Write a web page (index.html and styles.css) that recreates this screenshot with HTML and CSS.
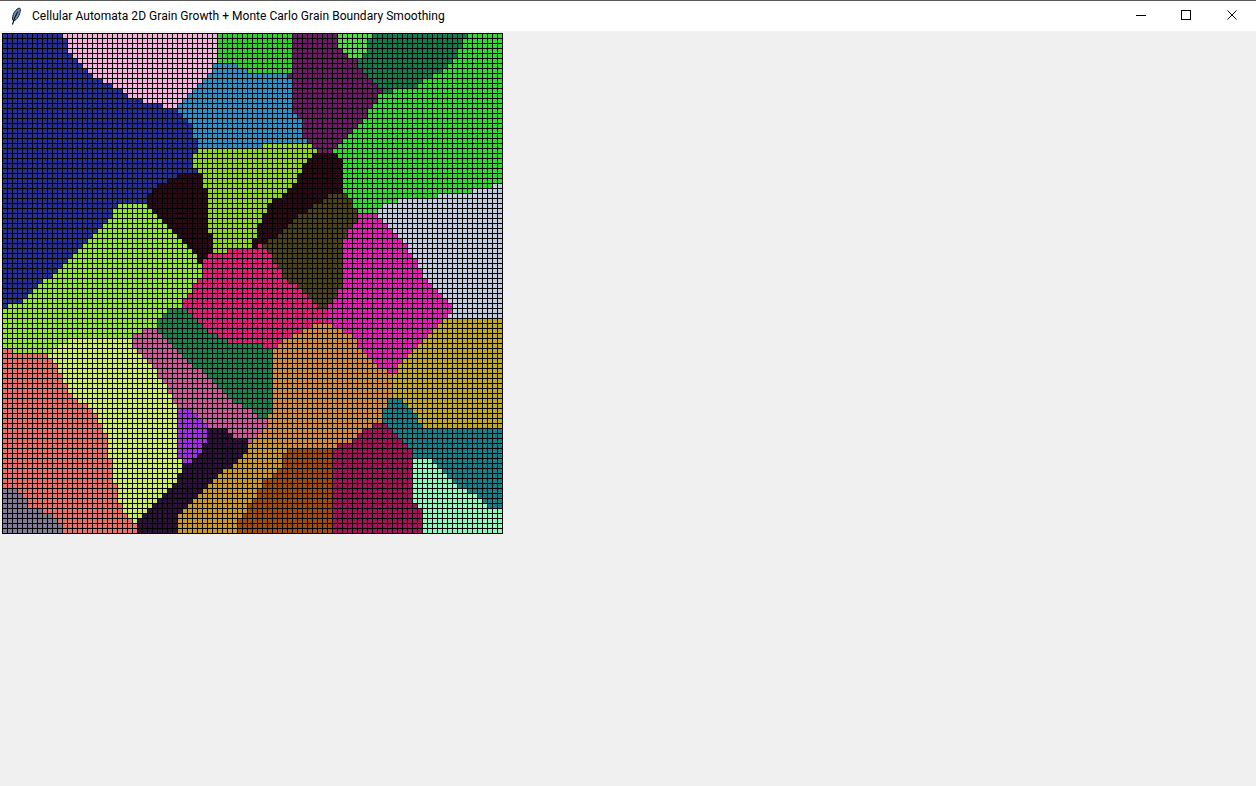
FILE: index.html
```html
<!DOCTYPE html>
<html lang="en">
<head>
  <meta charset="UTF-8">
  <title>Cellular Automata 2D Grain Growth + Monte Carlo Grain Boundary Smoothing</title>
  <link rel="stylesheet" href="styles.css">
</head>
<body>
  <div class="window">
    <header class="titlebar">
      <svg class="app-icon" width="16" height="20" viewBox="0 0 16 20">
        <path d="M11.500 2C8 3 5 7 4.500 12c-.2 1.500.3 2.500 1 3C9 14 12 9 12.500 3.500z" fill="#6d8fba" stroke="#141c28"/>
        <path d="M10 5.500C8 8.500 6 12 4.500 18.500" fill="none" stroke="#0c1118" stroke-width="1.200"/>
      </svg>
      <span class="title">Cellular Automata 2D Grain Growth + Monte Carlo Grain Boundary Smoothing</span>
      <div class="controls">
        <button class="ctrl ctrl-min" aria-label="Minimize">
          <svg width="10" height="10" viewBox="0 0 10 10"><path d="M0 5.500H10" stroke="#000"/></svg>
        </button>
        <button class="ctrl" aria-label="Maximize">
          <svg width="10" height="10" viewBox="0 0 10 10"><rect x=".5" y=".5" width="9" height="9" fill="none" stroke="#000"/></svg>
        </button>
        <button class="ctrl" aria-label="Close">
          <svg width="10" height="10" viewBox="0 0 10 10"><path d="M.5 .5L9.500 9.500M9.500 .5L.5 9.500" stroke="#000"/></svg>
        </button>
      </div>
    </header>
    <main class="content">
      <canvas id="grid" width="501" height="501"></canvas>
    </main>
  </div>
  <script src="grid.js"></script>
</body>
</html>
```

FILE: styles.css
```css
html, body {
    height: 100%;
    margin: 0;
}

body {
    font-family: Roboto, sans-serif;
    background-color: #f0f0f0;
}

.window {
    height: 100%;
    display: flex;
    flex-direction: column;
    overflow: hidden;
}

.titlebar {
    flex: none;
    height: 30px;
    display: flex;
    align-items: center;
    background-color: #fff;
    border-top: 1px solid #5a5a5a;
}

.app-icon {
    flex: none;
    margin-left: 8px;
    margin-right: 8px;
}

.title {
    font-size: 12px;
    letter-spacing: .04px;
    color: #000;
    white-space: nowrap;
}

.controls {
    margin-left: auto;
    display: flex;
    height: 100%;
    padding-right: 1px;
    padding-bottom: 2px;
    box-sizing: border-box;
}

.ctrl {
    width: 46px;
    padding: 0;
    border: 0;
    background: none;
    display: flex;
    align-items: center;
    justify-content: center;
}

.ctrl-min svg {
    margin-left: 2px;
}

.content {
    flex: 1;
    padding: 2px;
}

#grid {
    display: block;
}
```

FILE: grid.js
```js
// grain outlines in page pixels, later ones paint over earlier ones
const CELL = 5;
const COUNT = 100;
const LEFT = 2;
const TOP = 33;

const grains = [
  ['#252f96', [[2,33],[63,33],[68,50],[90,73],[110,85],[137,100],[168,108],[177,108],[182,118],[192,127],[198,148],[193,158],[193,168],[197,173],[183,173],[163,183],[147,198],[147,203],[122,203],[93,235],[78,250],[48,278],[33,293],[17,303],[2,308]]],
  ['#f5b0dc', [[63,33],[217,33],[217,63],[205,78],[190,98],[177,108],[168,108],[137,100],[110,85],[90,73],[68,50]]],
  ['#33d02c', [[217,33],[292,33],[292,70],[283,75],[260,75],[240,68],[228,63],[217,63]]],
  ['#3090c4', [[227,63],[240,68],[260,75],[283,75],[292,85],[293,108],[303,123],[303,143],[262,146],[198,148],[192,127],[182,118],[177,108],[182,100],[205,78],[217,63]]],
  ['#6a1d62', [[292,33],[337,33],[337,43],[352,58],[358,63],[362,72],[382,88],[378,98],[368,113],[357,128],[337,148],[332,153],[318,153],[302,138],[302,123],[293,108],[292,83],[287,73],[292,70]]],
  ['#57d84a', [[337,33],[377,33],[372,43],[367,50],[358,63],[352,58],[337,43]]],
  ['#187a4c', [[372,33],[467,33],[463,47],[447,67],[428,78],[413,88],[382,93],[362,72],[358,63],[367,50]]],
  ['#33d830', [[467,33],[503,33],[503,183],[483,188],[463,193],[417,198],[388,203],[377,213],[358,213],[352,203],[343,193],[343,163],[337,153],[332,153],[337,148],[357,128],[368,113],[378,98],[382,93],[413,88],[428,78],[447,67],[463,47]]],
  ['#c0c8dc', [[503,183],[503,318],[448,318],[452,308],[428,283],[417,263],[403,243],[393,233],[377,213],[388,203],[417,198],[463,193],[483,188]]],
  ['#e020b0', [[358,213],[377,213],[393,233],[403,243],[417,263],[428,283],[452,308],[448,318],[433,333],[418,348],[398,367],[397,373],[387,373],[383,368],[368,358],[358,343],[347,333],[328,323],[327,308],[337,297],[343,283],[343,243],[347,230],[358,220]]],
  ['#90d420', [[202,148],[262,146],[303,143],[318,153],[313,158],[302,168],[292,187],[272,203],[262,218],[257,233],[252,248],[240,248],[220,253],[212,253],[212,233],[208,232],[208,200],[203,178],[193,168],[193,158]]],
  ['#2a0a14', [[318,153],[337,153],[343,163],[343,193],[333,193],[303,213],[293,223],[273,238],[263,243],[252,248],[257,233],[262,218],[272,203],[292,187],[302,168],[313,158]]],
  ['#4a421a', [[333,193],[347,193],[352,203],[358,213],[358,220],[347,230],[343,243],[343,283],[327,300],[327,307],[318,308],[313,300],[300,290],[288,280],[282,273],[272,257],[263,243],[273,238],[293,223],[303,213]]],
  ['#2a0a14', [[183,173],[197,173],[203,178],[208,200],[208,232],[212,233],[212,253],[208,258],[202,263],[197,258],[188,248],[168,228],[157,218],[147,208],[147,198],[163,183]]],
  ['#92e430', [[122,203],[147,203],[157,218],[168,228],[188,248],[197,258],[202,263],[202,273],[193,288],[183,300],[183,308],[172,308],[157,323],[157,328],[147,328],[133,338],[70,340],[60,345],[48,358],[42,353],[12,353],[12,348],[2,348],[2,308],[17,303],[33,293],[48,278],[78,250],[93,235]]],
  ['#e02078', [[212,253],[220,253],[240,248],[252,248],[263,243],[272,257],[282,273],[288,280],[300,290],[313,300],[318,308],[327,308],[328,323],[318,323],[298,333],[272,343],[267,348],[250,343],[233,343],[213,333],[198,323],[188,308],[183,308],[183,300],[193,288],[202,273],[202,263]]],
  ['#cfec5c', [[70,338],[132,338],[133,348],[147,358],[152,367],[162,383],[167,388],[177,403],[177,453],[183,463],[177,473],[177,483],[167,493],[157,503],[137,523],[132,523],[122,507],[117,497],[112,468],[107,438],[98,418],[82,403],[68,390],[63,375],[48,358],[60,345]]],
  ['#e87068', [[2,348],[12,348],[12,353],[42,353],[48,358],[63,375],[68,390],[82,403],[98,418],[107,438],[112,468],[117,497],[122,507],[132,523],[137,523],[137,534],[2,534]]],
  ['#807a94', [[2,483],[7,488],[22,493],[28,508],[52,513],[62,528],[62,534],[2,534]]],
  ['#2c1238', [[137,523],[157,503],[177,483],[183,463],[193,463],[203,448],[207,443],[208,428],[228,428],[233,438],[248,438],[248,448],[243,458],[228,468],[218,478],[198,498],[188,508],[178,518],[178,534],[137,534]]],
  ['#a030e0', [[178,408],[193,408],[198,418],[207,423],[207,443],[203,448],[193,458],[192,463],[183,463],[177,453]]],
  ['#c85a98', [[132,338],[147,328],[157,328],[172,343],[183,358],[198,368],[213,383],[232,403],[248,408],[257,418],[267,418],[267,428],[257,438],[253,443],[248,448],[248,438],[233,438],[228,428],[208,428],[207,423],[198,418],[193,408],[178,408],[167,388],[147,358],[133,348]]],
  ['#208050', [[172,308],[188,308],[198,323],[213,333],[233,343],[250,343],[267,348],[272,348],[272,408],[267,418],[257,418],[248,408],[232,403],[213,383],[198,368],[183,358],[172,343],[157,328],[157,323]]],
  ['#d08c3c', [[318,323],[328,323],[347,333],[358,343],[368,358],[383,368],[387,373],[393,373],[393,398],[387,398],[387,408],[383,413],[383,423],[372,428],[357,433],[352,443],[337,448],[292,448],[272,438],[257,438],[267,428],[267,418],[272,408],[272,348],[298,333]]],
  ['#c89828', [[178,534],[178,518],[198,498],[218,478],[228,468],[243,458],[248,448],[253,443],[257,438],[272,438],[292,448],[282,458],[282,468],[262,483],[252,503],[237,523],[237,534]]],
  ['#a04c10', [[237,534],[237,523],[252,503],[262,483],[282,468],[282,458],[292,448],[332,448],[332,534]]],
  ['#a01458', [[332,448],[352,443],[357,433],[372,428],[378,423],[387,423],[397,433],[407,443],[417,453],[412,458],[412,498],[422,508],[422,534],[332,534]]],
  ['#188088', [[387,398],[402,398],[407,403],[418,418],[423,428],[503,428],[503,508],[487,508],[482,498],[472,493],[462,488],[452,478],[438,468],[428,458],[412,458],[417,453],[397,433],[387,423],[383,423],[383,413],[387,408]]],
  ['#90f4bc', [[412,458],[428,458],[438,468],[452,478],[462,488],[472,493],[482,498],[487,508],[503,508],[503,534],[422,534],[422,508],[412,498]]],
  ['#c0a820', [[448,318],[503,318],[503,428],[423,428],[418,418],[407,403],[402,398],[393,398],[393,373],[397,373],[398,367],[418,348],[433,333]]]
];

function inside(px, py, points) {
  let hit = false;
  for (let i = 0, j = points.length - 1; i < points.length; j = i++) {
    const [xi, yi] = points[i];
    const [xj, yj] = points[j];
    if ((yi > py) !== (yj > py) && px < (xj - xi) * (py - yi) / (yj - yi) + xi) {
      hit = !hit;
    }
  }
  return hit;
}

const ctx = document.getElementById('grid').getContext('2d');
ctx.fillStyle = '#000';
ctx.fillRect(0, 0, 501, 501);

for (let row = 0; row < COUNT; row++) {
  let last = grains[0][0];
  for (let col = 0; col < COUNT; col++) {
    const px = LEFT + col * CELL + 3;
    const py = TOP + row * CELL + 3;
    // a cell that falls between two outlines takes its left neighbour's colour
    let color = last;
    for (const [fill, points] of grains) {
      if (inside(px, py, points)) color = fill;
    }
    ctx.fillStyle = color;
    ctx.fillRect(col * CELL + 1, row * CELL + 1, CELL - 1, CELL - 1);
    last = color;
  }
}
```
